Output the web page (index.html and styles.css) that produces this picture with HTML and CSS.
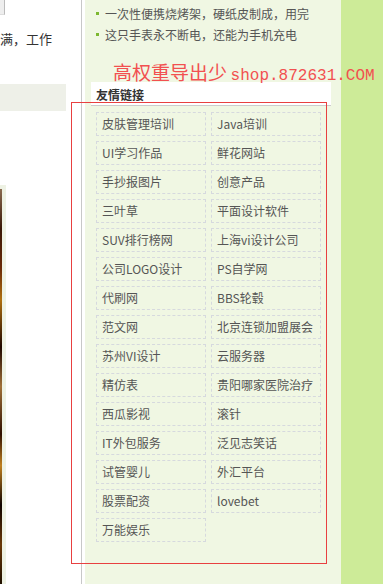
FILE: index.html
```html
<!DOCTYPE html>
<html lang="zh-CN">
<head>
    <meta charset="UTF-8">
    <meta name="viewport" content="width=device-width, initial-scale=1.0">
    <title>友情链接</title>
    <link rel="stylesheet" href="styles.css">
</head>
<body>
    <div class="left">
        <div class="thumb"></div>
        <p class="intro">满，工作</p>
        <div class="bar"></div>
        <div class="photo"><div class="photo-img"></div></div>
    </div>
    <div class="main">
        <ul class="news">
            <li>一次性便携烧烤架，硬纸皮制成，用完</li>
            <li>这只手表永不断电，还能为手机充电</li>
        </ul>
        <div class="ad"><span class="ad-cn">高权重导出少</span> <span class="ad-en">shop.872631.COM</span></div>
        <div class="links">
            <h3 class="links-title">友情链接</h3>
            <div class="links-grid">
                <a href="#">皮肤管理培训</a>
                <a href="#">Java培训</a>
                <a href="#">UI学习作品</a>
                <a href="#">鲜花网站</a>
                <a href="#">手抄报图片</a>
                <a href="#">创意产品</a>
                <a href="#">三叶草</a>
                <a href="#">平面设计软件</a>
                <a href="#">SUV排行榜网</a>
                <a href="#">上海vi设计公司</a>
                <a href="#">公司LOGO设计</a>
                <a href="#">PS自学网</a>
                <a href="#">代刷网</a>
                <a href="#">BBS轮毂</a>
                <a href="#">范文网</a>
                <a href="#">北京连锁加盟展会</a>
                <a href="#">苏州VI设计</a>
                <a href="#">云服务器</a>
                <a href="#">精仿表</a>
                <a href="#">贵阳哪家医院治疗</a>
                <a href="#">西瓜影视</a>
                <a href="#">滚针</a>
                <a href="#">IT外包服务</a>
                <a href="#">泛见志笑话</a>
                <a href="#">试管婴儿</a>
                <a href="#">外汇平台</a>
                <a href="#">股票配资</a>
                <a href="#">lovebet</a>
                <a href="#">万能娱乐</a>
            </div>
        </div>
    </div>
    <div class="side"></div>
    <div class="highlight"></div>
</body>
</html>
```

FILE: styles.css
```css
body {
    margin: 0;
    height: 584px;
    overflow: hidden;
    display: flex;
    font-family: "Noto Sans CJK SC", sans-serif;
    color: #555;
    background-color: #fff;
}
.left {
    width: 81px;
    border-right: 1px solid #c8c8c8;
    margin-right: 3px;
    flex-shrink: 0;
}
.thumb {
    width: 4px;
    height: 14px;
    background-color: #eee;
    border-right: 1px solid #bbb;
    border-bottom: 1px solid #ddd;
}
.intro {
    margin: 15px 0 0;
    font-size: 13px;
    line-height: 18px;
    color: #333;
    white-space: nowrap;
}
.bar {
    margin-top: 36px;
    width: 66px;
    height: 27px;
    background-color: #eef0e8;
}
.photo {
    margin-top: 74px;
    width: 2px;
    height: 395px;
    border: 4px solid #eef2e4;
    border-left: none;
    border-bottom: none;
}
.photo-img {
    height: 100%;
    background: linear-gradient(#8a6a50, #3a1808 10%, #6a2a08 20%, #b07010 28%, #200800 40%, #a07038 50%, #301000 62%, #c08020 70%, #100400 80%, #6a3808 90%, #201000);
}
.main {
    width: 256px;
    flex-shrink: 0;
    background-color: #f0f7e3;
    padding-top: 3px;
    position: relative;
    z-index: 1;
}
.news {
    list-style: none;
    margin: 0;
    padding: 0 0 0 11px;
}
.news li {
    position: relative;
    padding-left: 9px;
    font-size: 12px;
    line-height: 21px;
    color: #555;
    white-space: nowrap;
}
.news li::before {
    content: "";
    position: absolute;
    left: 0;
    top: 9px;
    width: 3px;
    height: 3px;
    background-color: #7cb82f;
}
.ad {
    margin: 16px 0 0 28px;
    line-height: 22px;
    height: 21px;
    color: #f25050;
    white-space: nowrap;
}
.ad-cn {
    font-size: 19px;
}
.ad-en {
    font-family: "Liberation Mono", monospace;
    font-size: 16px;
}
.links {
    margin: 0 0 0 6px;
    width: 240px;
}
.links-title {
    margin: 0;
    height: 23px;
    line-height: 25px;
    padding-left: 5px;
    font-size: 12px;
    font-weight: bold;
    color: #333;
    background-color: #fff;
    border-bottom: 1px solid #ccc;
}
.links-grid {
    display: grid;
    grid-template-columns: 110px 110px;
    column-gap: 5px;
    row-gap: 5px;
    padding: 6px 5px 0;
}
.links-grid a {
    display: block;
    height: 22px;
    line-height: 22px;
    padding-left: 5px;
    border: 1px dashed #d6d9de;
    font-size: 12px;
    color: #555;
    text-decoration: none;
    white-space: nowrap;
}
.side {
    flex: 1;
    background-color: #cdeb98;
}
.highlight {
    position: absolute;
    z-index: 2;
    left: 71px;
    top: 102px;
    width: 254px;
    height: 460px;
    border: 1px solid #e84040;
}
```
